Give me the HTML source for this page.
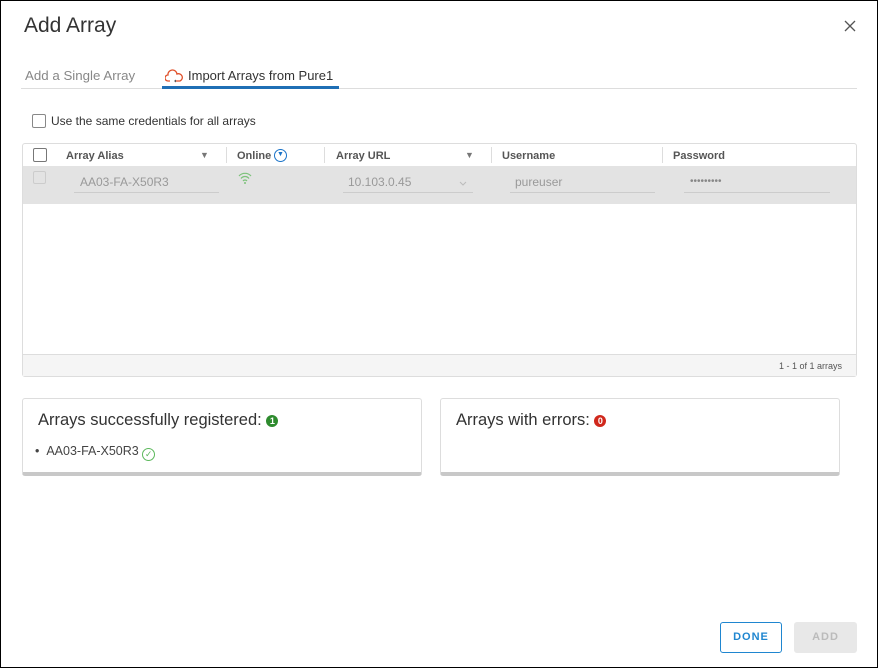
<!DOCTYPE html>
<html><head><style>
*{box-sizing:border-box;margin:0;padding:0}
body{width:878px;height:668px;overflow:hidden;background:#fff;font-family:"Liberation Sans",sans-serif;color:#333;position:relative}
.frame{position:absolute;left:0;top:0;width:878px;height:668px;border:1px solid #000}
.a{position:absolute}
.hd{font-size:11px;font-weight:bold;color:#555;top:150px}
.sep{position:absolute;top:147px;width:1px;height:16px;background:#ddd}
.inp{position:absolute;top:192px;height:1px;background:#ccc}
.card{position:absolute;top:398px;height:78px;background:#fff;border:1px solid #ddd;border-bottom:4px solid #c8c8c8;border-radius:3px}
.badge{display:inline-block;width:12px;height:12px;border-radius:6px;color:#fff;font-size:9px;text-align:center;line-height:12px;vertical-align:1px;font-weight:bold}
</style></head><body>
<div class="frame"></div>
<div class="a" style="left:24px;top:14px;font-size:21px;color:#333">Add Array</div>
<svg class="a" style="left:844px;top:20px" width="12" height="12" viewBox="0 0 12 12"><path d="M1 1 L11 11 M11 1 L1 11" stroke="#555" stroke-width="1.3"/></svg>
<div class="a" style="left:21px;top:88px;width:836px;height:1px;background:#ddd"></div>
<div class="a" style="left:25px;top:68px;font-size:13.3px;color:#888">Add a Single Array</div>
<svg class="a" style="left:165px;top:69px" width="18" height="14" viewBox="0 0 18 14"><path d="M5 12 H3 A3 3 0 0 1 3 6 A4.5 4.5 0 0 1 12 5 A3.5 3.5 0 0 1 15 12 H11" fill="none" stroke="#e0502a" stroke-width="1.3"/><path d="M9 12 L11 10.5 L11 13.5 Z" fill="#555"/></svg>
<div class="a" style="left:188px;top:68px;font-size:13px;color:#333">Import Arrays from Pure1</div>
<div class="a" style="left:162px;top:86px;width:177px;height:3px;background:#1f6fb5"></div>
<div class="a" style="left:32px;top:114px;width:14px;height:14px;border:1px solid #888;border-radius:2px"></div>
<div class="a" style="left:51px;top:114px;font-size:12px;color:#333">Use the same credentials for all arrays</div>
<div class="a" style="left:22px;top:143px;width:835px;height:234px;border:1px solid #ddd;border-radius:3px"></div>
<div class="a" style="left:23px;top:166px;width:833px;height:38px;background:#e3e3e3"></div>
<div class="a" style="left:23px;top:354px;width:833px;height:22px;background:#f5f5f5;border-top:1px solid #ddd"></div>
<div class="a" style="left:33px;top:148px;width:14px;height:14px;border:1px solid #777;border-radius:2px"></div>
<div class="a hd" style="left:66px">Array Alias</div>
<div class="a" style="left:200px;top:150px;font-size:9px;color:#777">▼</div>
<div class="sep" style="left:226px"></div>
<div class="a hd" style="left:237px">Online</div>
<div class="a" style="left:274px;top:149px;width:13px;height:13px;border:1.5px solid #1a73c8;border-radius:7px;font-size:7px;color:#1a73c8;text-align:center;line-height:10px">▼</div>
<div class="sep" style="left:324px"></div>
<div class="a hd" style="left:336px">Array URL</div>
<div class="a" style="left:465px;top:150px;font-size:9px;color:#777">▼</div>
<div class="sep" style="left:491px"></div>
<div class="a hd" style="left:502px">Username</div>
<div class="sep" style="left:662px"></div>
<div class="a hd" style="left:673px">Password</div>
<div class="a" style="left:33px;top:171px;width:13px;height:13px;border:1px solid #ccc;border-radius:2px"></div>
<div class="a" style="left:80px;top:175px;font-size:12px;color:#999">AA03-FA-X50R3</div>
<div class="inp" style="left:74px;width:145px"></div>
<svg class="a" style="left:237px;top:171px" width="16" height="14" viewBox="0 0 16 14"><path d="M2 5 A8 8 0 0 1 14 5 M4 7.5 A5 5 0 0 1 12 7.5 M6 10 A2.5 2.5 0 0 1 10 10" fill="none" stroke="#7cc27a" stroke-width="1.2"/><circle cx="8" cy="12" r="1" fill="#7cc27a"/></svg>
<div class="a" style="left:348px;top:175px;font-size:12px;color:#999">10.103.0.45</div>
<svg class="a" style="left:459px;top:181px" width="8" height="5" viewBox="0 0 8 5"><path d="M1 1 L4 4 L7 1" fill="none" stroke="#bbb"/></svg>
<div class="inp" style="left:343px;width:130px"></div>
<div class="a" style="left:515px;top:175px;font-size:12px;color:#999">pureuser</div>
<div class="inp" style="left:510px;width:145px"></div>
<div class="a" style="left:690px;top:176px;font-size:10px;color:#888">•••••••••</div>
<div class="inp" style="left:684px;width:146px"></div>
<div class="a" style="left:779px;top:361px;font-size:9px;color:#555">1 - 1 of 1 arrays</div>
<div class="card" style="left:22px;width:400px">
<div class="a" style="left:15px;top:12px;font-size:16.5px;color:#333">Arrays successfully registered: <span class="badge" style="background:#2e8b2e">1</span></div>
<div class="a" style="left:12px;top:45px;font-size:12.5px;color:#444">•&nbsp;&nbsp;AA03-FA-X50R3 <span style="display:inline-block;width:13px;height:13px;border:1.3px solid #5cb85c;border-radius:7px;color:#5cb85c;font-size:9px;line-height:10px;text-align:center;vertical-align:-2px">✓</span></div>
</div>
<div class="card" style="left:440px;width:400px">
<div class="a" style="left:15px;top:12px;font-size:16.5px;color:#333">Arrays with errors: <span class="badge" style="background:#d0281c">0</span></div>
</div>
<div class="a" style="left:720px;top:622px;width:62px;height:31px;border:1px solid #1f86d0;border-radius:3px;color:#1f86d0;font-size:11px;font-weight:bold;text-align:center;line-height:29px;letter-spacing:1px">DONE</div>
<div class="a" style="left:794px;top:622px;width:63px;height:31px;background:#e8e8e8;border-radius:3px;color:#bbb;font-size:11px;font-weight:bold;text-align:center;line-height:31px;letter-spacing:1px">ADD</div>
</body></html>
